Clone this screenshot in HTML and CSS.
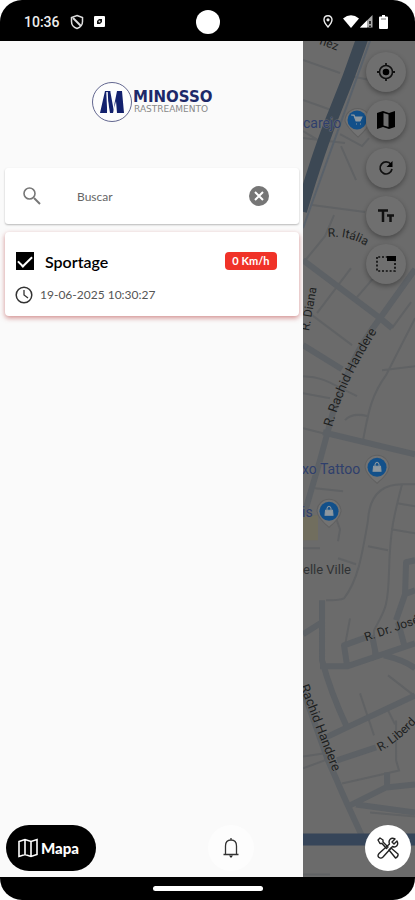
FILE: index.html
```html
<!DOCTYPE html>
<html lang="pt-BR">
<head>
<meta charset="utf-8">
<meta name="viewport" content="width=device-width, initial-scale=1">
<title>Minosso Rastreamento</title>
<link rel="stylesheet" href="styles.css">
</head>
<body>
<div class="phone">
  <header class="status">
    <div class="status-left">
      <span class="clock">10:36</span>
      <svg width="14" height="16" viewBox="0 0 14 16"><path d="M7 1.500 12.500 3.500V7.500C12.500 11 10 13.500 7 14.500 4 13.500 1.500 11 1.500 7.500V3.500Z" fill="none" stroke="#ddd" stroke-width="1.500"/><path d="M3 4 11 12" stroke="#ddd" stroke-width="2"/></svg>
      <svg width="11" height="11" viewBox="0 0 11 11"><rect width="11" height="11" rx="1" fill="#fff"/><path d="M3 8V5L5 3H8V6L6 8Z" fill="#111"/><circle cx="5.500" cy="5.500" r="1" fill="#ddd"/></svg>
    </div>
    <span class="camera"></span>
    <div class="status-right">
      <svg width="10" height="13" viewBox="0 0 10 13"><path d="M5 .8C2.500.8 1 2.600 1 4.800 1 7.500 5 12 5 12S9 7.500 9 4.800C9 2.600 7.500.8 5 .8Z" fill="none" stroke="#eee" stroke-width="1.400"/><circle cx="5" cy="4.800" r="1.600" fill="#eee"/></svg>
      <svg class="wifi" width="16" height="13" viewBox="0 0 16 13"><path d="M0 3.500Q8-3 16 3.500L8 13Z" fill="#fff"/></svg>
      <svg width="14" height="13" viewBox="0 0 14 13"><path d="M1 12.500 13.500 0V12.500Z" fill="#aaa"/><path d="M1 12.500 8 5.500V12.500Z" fill="#fff"/><path d="M11 6v3M11 10.500v1.500" stroke="#000" stroke-width="1.500"/></svg>
      <svg class="battery" width="9" height="14" viewBox="0 0 9 14"><path d="M3 0H6V1.500H8Q9 1.500 9 2.500V13Q9 14 8 14H1Q0 14 0 13V2.500Q0 1.500 1 1.500H3Z" fill="#fff"/><path d="M2 4H7" stroke="#777"/></svg>
    </div>
  </header>

  <main class="screen">
    <aside class="drawer">
      <svg class="logo" viewBox="-2 0 124 42" role="img" aria-label="Minosso Rastreamento">
        <circle cx="21" cy="21" r="19.500" fill="#fdfdfd" stroke="#62668f"/>
        <path d="M14 10H20L23 25 26 10H31L33 32H26L25 20 22 32H19L17 20 16 32H9Z" fill="#13216d"/>
        <path d="M20 10 24 32M16 11 17 32" stroke="#fdfdfd" stroke-width="1.500"/>
        <text class="brand" x="42" y="21">MINOSSO</text>
        <text class="tagline" x="43" y="31">RASTREAMENTO</text>
      </svg>

      <label class="search">
        <svg width="20" height="20" viewBox="0 0 20 20"><circle cx="7.500" cy="7.500" r="5.500" fill="none" stroke="#777" stroke-width="1.600"/><path d="M12 12 18 18" stroke="#777" stroke-width="2"/></svg>
        <input type="text" placeholder="Buscar" aria-label="Buscar">
        <button class="clear" type="button" aria-label="Limpar"><svg width="20" height="20" viewBox="0 0 20 20"><circle cx="10" cy="10" r="10" fill="#767676"/><path d="M6 6 14 14M14 6 6 14" stroke="#fff" stroke-width="2"/></svg></button>
      </label>

      <section class="vehicle">
        <div class="row">
          <label class="name"><input type="checkbox" checked>Sportage</label>
          <span class="speed">0 Km/h</span>
        </div>
        <div class="time">
          <svg width="18" height="18" viewBox="0 0 18 18"><circle cx="9" cy="9" r="7.800" fill="none" stroke="#333" stroke-width="1.500"/><path d="M9 4V9L13 12" fill="none" stroke="#333" stroke-width="1.300"/></svg>
          <time datetime="2025-06-19T10:30:27">19-06-2025 10:30:27</time>
        </div>
      </section>

      <nav class="tabs">
        <a class="tab-map" href="#mapa"><svg width="20" height="20" viewBox="0 0 20 20"><path d="M1 3.500 7 1.500 13 3.500 19 1.500V16.500L13 18.500 7 16.500 1 18.500ZM7 1.500V16.500M13 3.500V18.500" fill="none" stroke="#fff" stroke-width="1.600"/></svg>Mapa</a>
        <a class="tab-bell" href="#alertas" aria-label="Alertas"><svg width="18" height="22" viewBox="0 0 18 22"><path d="M1.500 17.500H16.500M3.500 17V9C3.500 5 5.500 3 9 3S14.500 5 14.500 9V17M9 1V3" fill="none" stroke="#333" stroke-width="1.300"/><path d="M7 18.500H11L9 21Z" fill="#222"/></svg></a>
      </nav>
    </aside>

    <section class="map" aria-label="Mapa">
      <svg class="map-art" viewBox="303 41 112 836" preserveAspectRatio="xMinYMin slice">
        <defs>
          <path id="rachid-north" d="M332 427Q345 380 381 325"/>
          <path id="liberdade" d="M380 751Q402 740 425 712"/>
          <path id="italia" d="M328 237Q350 234 374 251"/>
        </defs>
        <g class="lane">
          <path d="M303 60 340 73M303 100 334 111M340 134 362 146 369 138M341 146 356 180M312 205 365 212M303 131 318 140M350 76 380 82M345 143 303 138"/>
          <path d="M303 263 325 236 334 215M317 313 351 268M312 315 352 345M357 297 376 275M415 318 386 375C370 397 368 415 363 440M382 370 415 366M392 328 411 302M303 376C325 377 330 383 357 396M303 393 330 398M345 420Q352 412 368 416M303 428 327 434"/>
          <path d="M368 520Q370 484 402 484H415M402 484C394 515 390 530 389 570S384 610 374 630L373 660M397 503 415 506M391 529 415 533M368 546 388 550M368 520C362 555 358 580 344 598 340 600 330 600 326 600M338 558 356 564M303 548H320M315 488 343 491M336 518 340 529 338 541M350 618 345 645"/>
          <path d="M360 693 374 735M388 675 415 696M396 720V760L399 770 386 773 342 783M303 768 330 758M303 756 330 752M388 710 395 724M370 812 415 816M303 874H330"/>
        </g>
        <g class="street">
          <path d="M303 260 380 318 392 328M303 345 342 369M415 269 380 318C352 355 345 380 333 412L320 460 303 518M323 432 415 454"/>
          <path d="M303 634 322 622M322 600V660C330 690 339 710 347 727M320 666H347L415 643M347 665 344 645 366 637M376 655 372 635M404 644 398 622M384 655Q405 660 415 668M415 695 347 727 326 737M337 760 376 747M336 778C345 800 355 820 364 840M350 805 386 787 415 784M356 804 415 812M387 787V772M415 560 406 562 405 594 396 620M404 594 415 590M303 690 328 760 336 778"/>
        </g>
        <path class="avenue-edge" d="M371 38 303 228"/>
        <path class="avenue" d="M363 36Q350 75 335 111T301 211"/>
        <path class="avenue bottom" d="M303 839H415"/>
        <path d="M303 515H318V540H303Z" fill="#716e5e"/>
        <g class="label">
          <text x="319" y="44" transform="rotate(20 319 44)">ñez</text>
          <text><textPath href="#italia">R. Itália</textPath></text>
          <text x="309" y="331" transform="rotate(-80 309 331)">R. Diana</text>
          <text class="long"><textPath href="#rachid-north">R. Rachid Handere</textPath></text>
          <text x="366" y="641" transform="rotate(-19 366 641)">R. Dr. José</text>
          <text class="long" x="300" y="686" transform="rotate(69 300 686)">Rachid Handere</text>
          <text><textPath href="#liberdade">R. Liberd</textPath></text>
        </g>
        <g class="place"><text x="303" y="128">carejo</text><text x="302" y="474">xo Tattoo</text><text x="302" y="517">is</text></g>
        <text class="district" x="303" y="574">elle Ville</text>
        <g class="pin">
          <path d="M345 121A12 12 0 1 1 370 121Q369 127 358 137 347 127 345 121Z"/><circle cx="357" cy="120" r="9.500"/>
          <path class="glyph" d="M351 115H354L355 117H362L360 121H356L354 116M356 124H357M360 124H361"/>
          <path d="M365 467A12 12 0 1 1 389 467Q388 474 377 483 366 474 365 467Z"/><circle cx="377" cy="467" r="9.500"/>
          <path class="bag" d="M373.500 466H380.500L381 471H373Z"/><path class="handle" d="M375 466V464Q377 460 379 464V466"/>
          <path d="M317 511A12 12 0 1 1 341 511Q340 518 329 527 318 518 317 511Z"/><circle cx="329" cy="511" r="9.500"/>
          <path class="bag" d="M325.500 510H332.500L333 515H325Z"/><path class="handle" d="M327 510V508Q329 504 331 508V510"/>
        </g>
      </svg>

      <div class="controls">
        <button type="button" aria-label="Minha localização"><svg width="20" height="20" viewBox="0 0 20 20"><circle cx="10" cy="10" r="6.500" fill="none" stroke="#111" stroke-width="1.600"/><circle cx="10" cy="10" r="3.300"/><path d="M10 1V4M10 16V19M1 10H4M16 10H19" stroke="#111" stroke-width="1.800"/></svg></button>
        <button type="button" aria-label="Tipo de mapa"><svg width="20" height="20" viewBox="0 0 20 20"><path fill-rule="evenodd" d="M1 3 7 1 13 3 19 1V17L13 19 7 17 1 19ZM7.500 3V15.500L12.500 17V4.500Z"/></svg></button>
        <button type="button" aria-label="Atualizar"><svg width="16" height="16" viewBox="0 0 16 16"><path d="M13 4.500A6 6 0 1 0 14 9" fill="none" stroke="#111" stroke-width="1.700"/><path d="M14.500 1V7H8.500Z"/></svg></button>
        <button type="button" aria-label="Rótulos"><svg width="18" height="16" viewBox="0 0 18 16"><path d="M1 2.500H11M6 2.500V14M10 7.500H17M13.500 7.500V14" fill="none" stroke="#111" stroke-width="2.500"/></svg></button>
        <button type="button" aria-label="Janela"><svg width="20" height="16" viewBox="0 0 20 16"><path d="M1 1V15H19V1Z" fill="none" stroke="#111" stroke-width="1.700" stroke-dasharray="2 1.800"/><path d="M11 0H20V5H11Z"/></svg></button>
      </div>

      <button class="tools" type="button" aria-label="Ferramentas"><svg width="22" height="22" viewBox="0 0 22 22" fill="none" stroke="#222" stroke-width="1.400" stroke-linejoin="round"><path d="M1 3 3 1 6 3V5L11 10 9.500 11.500 5 6.500H3Z"/><path d="M12 13 14 11 21 17Q21.500 20 18.500 21Z"/><path d="M20 4 17 7 15 5 18 2C14 0 11 3 12.500 7L2 16.500Q0 19 2 20.500 4 22 6 20L15.500 9.500C19 11 22 8 20 4Z"/></svg></button>
    </section>
  </main>

  <footer class="gesture"><span></span></footer>
</div>
</body>
</html>
```
FILE: styles.css
```css
* { box-sizing: border-box; }
body { margin: 0; background: #fff; font-family: Lato, sans-serif; }
button { border: 0; padding: 0; }
svg { display: block; flex: none; }

.phone {
  display: flex;
  flex-direction: column;
  min-height: 100vh;
  border-radius: 22px;
  overflow: hidden;
  background: #000;
}

.status {
  display: grid;
  grid-template-columns: 1fr auto 1fr;
  align-items: center;
  height: 41px;
  padding: 2px 24px 0;
  color: #eee;
}
.status-left, .status-right { display: flex; align-items: center; }
.status-left { gap: 10px; }
.status-right { justify-content: flex-end; }
.wifi { margin-left: 10px; }
.battery { margin: 0 3px 0 6px; }
.clock { font: 500 14px/16px Roboto, sans-serif; }
.camera { width: 24px; height: 24px; border-radius: 50%; background: #fff; }

.screen { flex: 1; display: flex; }

.drawer {
  width: 73%;
  display: flex;
  flex-direction: column;
  background: #fafafa;
}
.logo { width: 124px; height: 42px; margin: 40px auto 45px; }
.brand { font: bold 15px "DejaVu Sans", sans-serif; fill: #1d2969; }
.tagline { font: 9px "DejaVu Sans", sans-serif; fill: #888; }

.search {
  display: flex;
  align-items: center;
  height: 56px;
  margin: 0 4px 0 5px;
  padding: 0 30px 0 17px;
  background: #fff;
  border-radius: 3px;
  box-shadow: 0 1px 2px #0004;
}
.search input {
  flex: 1;
  min-width: 0;
  margin-left: 35px;
  padding: 2px 0 0;
  border: 0;
  outline: 0;
  background: none;
  font: 12px/16px Lato, sans-serif;
}
.search input::placeholder { color: #666; opacity: 1; }
.clear { background: none; }

.vehicle {
  margin: 8px 4px 0 5px;
  padding: 18px 22px 12px 10px;
  background: #fff;
  border-radius: 4px;
  box-shadow: 0 2px 5px #b0303088;
}
.row { display: flex; align-items: center; justify-content: space-between; height: 22px; }
.name { display: flex; align-items: center; gap: 11px; font-size: 16px; font-weight: 600; color: #000; }
.name input {
  appearance: none;
  width: 18px;
  height: 18px;
  margin: 0 0 0 1px;
  background: #000;
  display: grid;
  place-items: center;
}
.name input::before {
  content: "";
  width: 12px;
  height: 6px;
  border: solid #fff;
  border-width: 0 0 2px 2px;
  transform: rotate(-45deg);
  margin-bottom: 3px;
}
.speed {
  width: 52px;
  border-radius: 4px;
  background: #f03228;
  color: #fff;
  font-size: 11px;
  font-weight: 700;
  line-height: 18px;
  text-align: center;
}
.time { display: flex; align-items: center; gap: 7px; margin-top: 14px; font-size: 12px; line-height: 18px; color: #555; }

.tabs {
  display: flex;
  justify-content: space-between;
  margin-top: auto;
  padding: 0 49px 6px 6px;
}
.tab-map {
  display: flex;
  align-items: center;
  gap: 3px;
  width: 90px;
  height: 46px;
  padding-left: 12px;
  border-radius: 23px;
  background: #000;
  color: #fff;
  font-size: 15px;
  font-weight: 900;
  text-decoration: none;
}
.tab-bell, .tools {
  display: grid;
  place-items: center;
  width: 46px;
  height: 46px;
  border-radius: 50%;
  background: #fff;
}
.tab-bell { background: #fdfdfd; }

.map { position: relative; flex: 1; background: #6b6b6b; overflow: hidden; }
.map-art { position: absolute; inset: 0; width: 100%; height: 100%; }
.lane path { fill: none; stroke: #606264; stroke-width: 2; }
.street path { fill: none; stroke: #5d6165; stroke-width: 6; stroke-linejoin: round; }
.avenue { fill: none; stroke: #3c4854; stroke-width: 12; }
.avenue-edge { fill: none; stroke: #59616a; stroke-width: 2; }
.bottom { stroke: #364559; }
.label text { font: 12px Roboto, sans-serif; fill: #1d1f21; stroke: #6b6b6b; stroke-width: 1; paint-order: stroke; }
.label .long { font-size: 13px; }
.place text { font: 14px Roboto, sans-serif; fill: #2f3f6c; stroke: #6b6b6b; stroke-width: 1; paint-order: stroke; }
.district { font: 13px Roboto, sans-serif; fill: #303234; }
.pin path { fill: #737373; stroke: #606060; }
.pin circle { fill: #12508a; }
.pin .glyph { fill: #8e989f; stroke: #8e989f; }
.pin .bag { fill: #8e989f; stroke: #8e989f; }
.pin .handle { fill: none; stroke: #8e989f; }

.controls {
  position: absolute;
  top: 11px;
  right: 9px;
  display: grid;
  gap: 8px;
}
.controls button {
  display: grid;
  place-items: center;
  width: 40px;
  height: 40px;
  border-radius: 50%;
  background: #6f6f6f;
  box-shadow: 0 2px 5px #0005;
}
.tools { position: absolute; right: 4px; bottom: 6px; }

.gesture { display: flex; justify-content: center; height: 23px; padding-top: 9px; }
.gesture span { width: 110px; height: 5px; border-radius: 3px; background: #fff; }
```
